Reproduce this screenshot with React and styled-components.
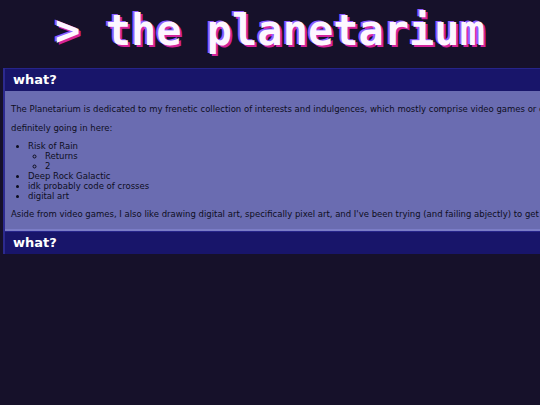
import React from "react";
import styled, { createGlobalStyle } from "styled-components";

const GlobalStyle = createGlobalStyle`
  html, body {
    margin: 0;
    padding: 0;
    background: #16112a;
    overflow: hidden;
  }
  body {
    font-family: "DejaVu Sans", Verdana, sans-serif;
  }
`;

const Page = styled.div`
  min-height: 405px;
  background: #16112a;
  padding-top: 6px;
`;

const Title = styled.h1`
  margin: 0;
  text-align: center;
  font-family: "DejaVu Sans Mono", "Liberation Mono", monospace;
  font-weight: bold;
  font-size: 42px;
  line-height: 50px;
  color: #fdf6ff;
  text-shadow: -2px -1px 0 #8f5cff, 2px 2px 0 #d4249b;
  white-space: nowrap;
`;

const Sections = styled.div`
  margin: 12px 0 0 3px;
  width: 1100px;
`;

const Section = styled.section`
  border-left: 2px solid #2c2a8e;
`;

const Header = styled.h2`
  margin: 0;
  height: 22px;
  padding-left: 8px;
  border-top: 1px solid #26248a;
  background: #18156a;
  color: #ffffff;
  font-size: 13px;
  font-weight: bold;
  line-height: 22px;
`;

const Body = styled.div`
  background: #6a6cb1;
  color: #0e0e1e;
  padding: 5px 6px 2px;
  border-bottom: 2px solid #7b7dc6;
  font-size: 8.5px;
  line-height: 10px;
`;

const Para = styled.p`
  margin: 8px 0 ${(p) => (p.$loose ? "9px" : "8px")};
  white-space: nowrap;
`;

const List = styled.ul`
  margin: ${(p) => (p.$nested ? "0" : "8px 0")};
  padding-left: 17px;
  list-style-type: ${(p) => (p.$nested ? "circle" : "disc")};
`;

export default function App() {
  return (
    <Page>
      <GlobalStyle />
      <Title>&gt; the planetarium</Title>
      <Sections>
        <Section>
          <Header>what?</Header>
          <Body>
            <Para $loose>
              The Planetarium is dedicated to my frenetic collection of interests and indulgences, which mostly comprise video games or digital art. Here's what's
            </Para>
            <Para>definitely going in here:</Para>
            <List>
              <li>
                Risk of Rain
                <List $nested>
                  <li>Returns</li>
                  <li>2</li>
                </List>
              </li>
              <li>Deep Rock Galactic</li>
              <li>idk probably code of crosses</li>
              <li>digital art</li>
            </List>
            <Para>
              Aside from video games, I also like drawing digital art, specifically pixel art, and I've been trying (and failing abjectly) to get better at it.
            </Para>
          </Body>
        </Section>
        <Section>
          <Header>what?</Header>
        </Section>
      </Sections>
    </Page>
  );
}
